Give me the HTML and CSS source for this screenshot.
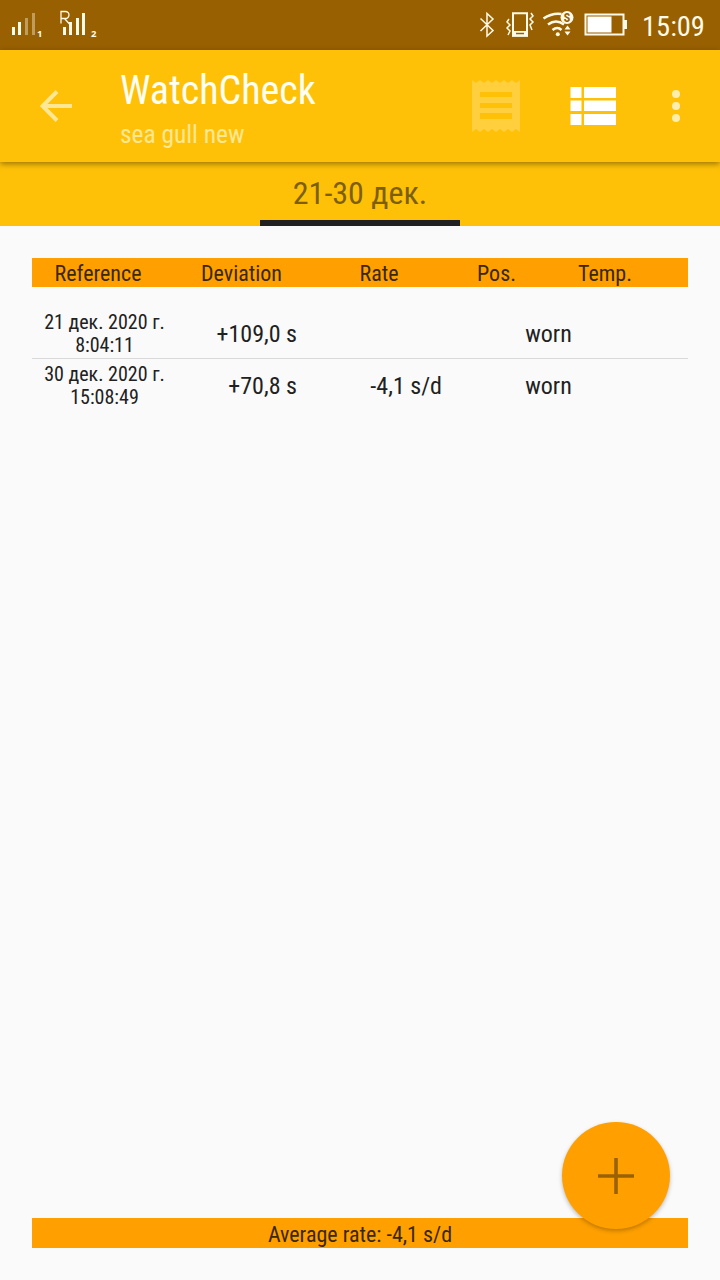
FILE: index.html
```html
<!DOCTYPE html>
<html lang="en">
  <head>
    <meta charset="utf-8">
    <title>WatchCheck</title>
    <link rel="stylesheet" href="styles.css">
  </head>
  <body>
    <div class="statusBar">
      <svg class="signals" width="100" height="50" viewBox="0 0 100 50">
        <g fill="#fffbe8">
          <path d="M12 27h3v8h-3zM18 22h3v13h-3z"/>
          <path d="M25 18h3v17h-3zM32 13h3v22h-3z" opacity=".4"/>
          <path d="M63 27h3v8h-3zM69 22h3v13h-3zM76 18h3v17h-3zM82 13h3v22h-3z"/>
        </g>
        <path d="M61 23.500V11.500h4.500a3.500 3.500 0 0 1 0 7H61M64.500 18.500l5 5.500" fill="none" stroke="#fffbe8" stroke-width="1.300"/>
        <text class="sim" x="37" y="37">1</text>
        <text class="sim" x="91" y="37">2</text>
      </svg>
      <svg class="indicators" width="150" height="50" viewBox="478 0 150 50">
        <g fill="none" stroke="#fffbe8" stroke-width="1.500">
          <path d="M480.500 18.500l12.500 12-6 5.500V13.500l6 5.500-12.500 12"/>
          <path d="M509 19l-2 3 3 3-3 3 3 3-2 4M531 13l2 3-3 3 3 3-3 3 2 5"/>
          <path d="M513 13.200h14v22.600h-14z" stroke-width="2"/>
          <path d="M543.500 18.500q9-6 18-4.500M548 24.500q8-6 16 0M552.500 30q5-4 9 0" stroke-width="2.600"/>
          <rect x="585.500" y="14.500" width="38" height="20" stroke-width="2"/>
        </g>
        <g fill="#fffbe8">
          <path d="M512 31h16v5.500h-16z"/>
          <circle cx="557.800" cy="34.300" r="2"/>
          <circle cx="567" cy="17.500" r="6.500"/>
          <path d="M564.500 29.500l3-4 3 4zM564.500 31.500l3 4 3-4z"/>
          <path d="M587.500 16.500h24v16h-24z" fill="#fff"/>
          <path d="M624 20h3v9h-3z"/>
        </g>
        <path d="M516 33.500h8" stroke="#986000" stroke-width="1.500"/>
        <text class="wifiBadge" x="567" y="21.800">S</text>
      </svg>
      <span class="clock">15:09</span>
    </div>

    <div class="toolbar">
      <svg class="back" width="32" height="32" viewBox="0 0 32 32">
        <path d="M32 16H3M17 1.500L2.500 16 17 30.500" fill="none" stroke="#ffe793" stroke-width="4"/>
      </svg>
      <div class="titles">
        <div class="title">WatchCheck</div>
        <div class="subtitle">sea gull new</div>
      </div>
      <svg class="receipt" width="48" height="54" viewBox="0 0 48 54">
        <path fill="#ffcf3e" fill-rule="evenodd" d="M0 1l4 3 4-3 4 3 4-3 4 3 4-3 4 3 4-3 4 3 4-3 4 3 4-3v52l-4-3-4 3-4-3-4 3-4-3-4 3-4-3-4 3-4-3-4 3-4-3-4 3zM8 13v5h32v-5zM8 24v5h32v-5zM8 34v6h32v-6z"/>
      </svg>
      <svg class="list" width="46" height="38" viewBox="0 0 46 38">
        <path fill="#fff" d="M.500 0h11v11H.500zM14 0h32v11H14zM.500 13.500h11v10.500H.500zM14 13.500h32v10.500H14zM.500 27h11v11H.500zM14 27h32v11H14z"/>
      </svg>
      <svg class="more" width="8" height="32" viewBox="0 0 8 32">
        <g fill="#ffedb0">
          <circle cx="4" cy="4" r="4"/>
          <circle cx="4" cy="16" r="4"/>
          <circle cx="4" cy="28" r="4"/>
        </g>
      </svg>
    </div>

    <div class="tabs">
      <div class="tab activeTab">21-30 дек.</div>
    </div>

    <div class="mainPanel">
      <div class="head">
        <span>Reference</span>
        <span>Deviation</span>
        <span>Rate</span>
        <span>Pos.</span>
        <span>Temp.</span>
      </div>
      <div class="rows">
        <div class="row">
          <span class="date">21 дек. 2020 г.<br>8:04:11</span>
          <span class="num">+109,0 s</span>
          <span class="num"></span>
          <span class="pos">worn</span>
        </div>
        <div class="row">
          <span class="date">30 дек. 2020 г.<br>15:08:49</span>
          <span class="num">+70,8 s</span>
          <span class="num">-4,1 s/d</span>
          <span class="pos">worn</span>
        </div>
      </div>
      <div class="average">Average rate: -4,1 s/d</div>
    </div>

    <div class="fab">
      <svg width="36" height="36" viewBox="0 0 36 36">
        <path d="M18 0v36M0 18h36" stroke="#996100" stroke-width="3.600"/>
      </svg>
    </div>
  </body>
</html>
```
FILE: styles.css
```css
* {
  box-sizing: border-box;
}

body {
  display: flex;
  flex-direction: column;
  position: relative;
  width: 720px;
  height: 1280px;
  margin: 0;
  overflow: hidden;
  background-color: #fafafa;
  color: #212121;
  font-family: "Roboto Condensed", Roboto, sans-serif;
  font-stretch: 75%;
  white-space: nowrap;
}

svg {
  display: block;
  flex: none;
}

.statusBar {
  display: flex;
  height: 50px;
  background-color: #986000;
}

.indicators {
  margin-left: 378px;
}

.sim {
  fill: #fffbe8;
  font-family: "Open Sans", sans-serif;
  font-size: 9.5px;
  font-stretch: 100%;
  font-weight: bold;
}

.wifiBadge {
  fill: #986000;
  font-size: 12px;
  font-stretch: 100%;
  font-weight: bold;
  text-anchor: middle;
}

.clock {
  margin-left: 14px;
  color: #fffbe8;
  font-size: 28.5px;
  line-height: 53px;
}

.toolbar {
  display: flex;
  align-items: center;
  position: relative;
  z-index: 1;
  height: 112px;
  padding-left: 40px;
  background-color: #ffc107;
  box-shadow: 0 2px 6px rgba(0, 0, 0, 0.4);
}

.titles {
  width: 352px;
  padding: 8px 0 0 48px;
}

.title {
  color: #fffef5;
  font-size: 40px;
  line-height: 48px;
}

.subtitle {
  color: #ffe793;
  font-size: 25.4px;
  line-height: 38px;
}

.receipt {
  margin-left: 48px;
}

.list {
  margin-left: 50px;
}

.more {
  margin-left: 56px;
}

.tabs {
  display: flex;
  justify-content: center;
  height: 64px;
  background-color: #ffc107;
}

.tab {
  width: 200px;
  color: #7c5f0a;
  font-size: 32px;
  line-height: 63px;
  text-align: center;
}

.activeTab {
  border-bottom: solid 6px #212121;
}

.mainPanel {
  display: flex;
  flex: 1;
  flex-direction: column;
  padding: 32px;
}

.head {
  display: grid;
  grid-template-columns: 132px 155px 120px 115px 102px;
  height: 29px;
  background-color: #ffa000;
  color: #3a2805;
  font-size: 22px;
  line-height: 32px;
  text-align: center;
}

.rows {
  flex: 1;
  padding-top: 23px;
}

.row {
  display: grid;
  grid-template-columns: 145px 120px 145px 70px;
  align-items: center;
  height: 48px;
  font-size: 24px;
}

.row + .row {
  height: 55px;
  border-top: solid 1px #d9d9d9;
}

.date {
  font-size: 20px;
  line-height: 23px;
  text-align: center;
}

.num {
  text-align: right;
}

.pos {
  margin-left: 36px;
  width: 141px;
  text-align: center;
}

.average {
  height: 30px;
  background-color: #ffa000;
  color: #3a2805;
  font-size: 22px;
  line-height: 34px;
  text-align: center;
}

.fab {
  display: flex;
  align-items: center;
  justify-content: center;
  position: absolute;
  right: 50px;
  bottom: 51px;
  width: 108px;
  height: 107px;
  border-radius: 50%;
  background-color: #ffa000;
  box-shadow: 0 2px 4px rgba(0, 0, 0, 0.25);
}
```
